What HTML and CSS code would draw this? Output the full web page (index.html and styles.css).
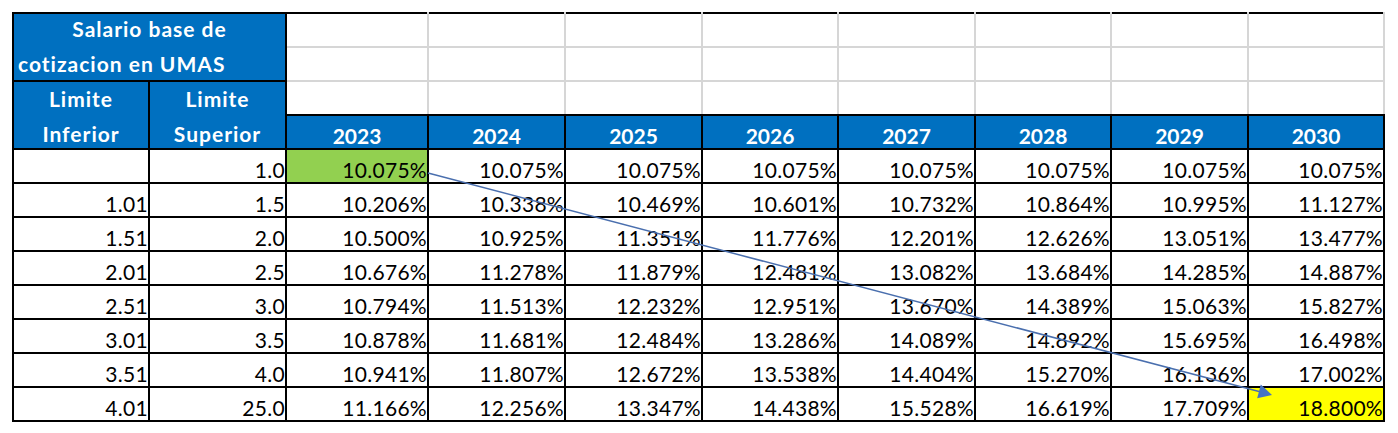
FILE: index.html
```html
<!DOCTYPE html>
<html lang="es">
<head>
<meta charset="utf-8">
<title>Salario base de cotizacion en UMAS</title>
<link rel="stylesheet" href="styles.css">
</head>
<body>
<div class="sheet">
  <table class="rates">
    <colgroup>
      <col class="c-lim"><col class="c-lim2"><col class="c-y23">
      <col class="c-y"><col class="c-y"><col class="c-y2"><col class="c-y">
      <col class="c-y2"><col class="c-y"><col class="c-y2">
    </colgroup>
    <tbody>
      <tr class="r-h1">
        <td class="hd merged" colspan="2" rowspan="2"><div class="box"><span class="l1">Salario base de</span><span class="l2">cotizacion en UMAS</span></div></td>
        <td class="blank top lft"></td><td class="blank top"></td><td class="blank top"></td><td class="blank top"></td><td class="blank top"></td><td class="blank top"></td><td class="blank top"></td><td class="blank top"></td>
      </tr>
      <tr class="r-h2">
        <td class="blank lft"></td><td class="blank"></td><td class="blank"></td><td class="blank"></td><td class="blank"></td><td class="blank"></td><td class="blank"></td><td class="blank"></td>
      </tr>
      <tr class="r-h3">
        <td class="hd lim" rowspan="2"><div class="box">Limite<br>Inferior</div></td>
        <td class="hd lim" rowspan="2"><div class="box">Limite<br>Superior</div></td>
        <td class="blank lft bot"></td><td class="blank bot"></td><td class="blank bot"></td><td class="blank bot"></td><td class="blank bot"></td><td class="blank bot"></td><td class="blank bot"></td><td class="blank bot"></td>
      </tr>
      <tr class="r-h4">
        <td class="hd yr">2023</td><td class="hd yr">2024</td><td class="hd yr">2025</td><td class="hd yr">2026</td><td class="hd yr">2027</td><td class="hd yr">2028</td><td class="hd yr">2029</td><td class="hd yr">2030</td>
      </tr>
      <tr>
        <td class="num"></td><td class="num">1.0</td><td class="num green">10.075%</td><td class="num">10.075%</td><td class="num">10.075%</td><td class="num">10.075%</td><td class="num">10.075%</td><td class="num">10.075%</td><td class="num">10.075%</td><td class="num">10.075%</td>
      </tr>
      <tr>
        <td class="num">1.01</td><td class="num">1.5</td><td class="num">10.206%</td><td class="num">10.338%</td><td class="num">10.469%</td><td class="num">10.601%</td><td class="num">10.732%</td><td class="num">10.864%</td><td class="num">10.995%</td><td class="num">11.127%</td>
      </tr>
      <tr>
        <td class="num">1.51</td><td class="num">2.0</td><td class="num">10.500%</td><td class="num">10.925%</td><td class="num">11.351%</td><td class="num">11.776%</td><td class="num">12.201%</td><td class="num">12.626%</td><td class="num">13.051%</td><td class="num">13.477%</td>
      </tr>
      <tr>
        <td class="num">2.01</td><td class="num">2.5</td><td class="num">10.676%</td><td class="num">11.278%</td><td class="num">11.879%</td><td class="num">12.481%</td><td class="num">13.082%</td><td class="num">13.684%</td><td class="num">14.285%</td><td class="num">14.887%</td>
      </tr>
      <tr>
        <td class="num">2.51</td><td class="num">3.0</td><td class="num">10.794%</td><td class="num">11.513%</td><td class="num">12.232%</td><td class="num">12.951%</td><td class="num">13.670%</td><td class="num">14.389%</td><td class="num">15.063%</td><td class="num">15.827%</td>
      </tr>
      <tr>
        <td class="num">3.01</td><td class="num">3.5</td><td class="num">10.878%</td><td class="num">11.681%</td><td class="num">12.484%</td><td class="num">13.286%</td><td class="num">14.089%</td><td class="num">14.892%</td><td class="num">15.695%</td><td class="num">16.498%</td>
      </tr>
      <tr>
        <td class="num">3.51</td><td class="num">4.0</td><td class="num">10.941%</td><td class="num">11.807%</td><td class="num">12.672%</td><td class="num">13.538%</td><td class="num">14.404%</td><td class="num">15.270%</td><td class="num">16.136%</td><td class="num">17.002%</td>
      </tr>
      <tr>
        <td class="num">4.01</td><td class="num">25.0</td><td class="num">11.166%</td><td class="num">12.256%</td><td class="num">13.347%</td><td class="num">14.438%</td><td class="num">15.528%</td><td class="num">16.619%</td><td class="num">17.709%</td><td class="num yellow">18.800%</td>
      </tr>
    </tbody>
  </table>
  <svg class="arrow" width="1398" height="433" viewBox="0 0 1398 433" aria-hidden="true">
    <line x1="428" y1="173" x2="1260" y2="391.8" stroke="#4a6fae" stroke-width="1.5"/>
    <polygon points="1272,395 1257.2,398.2 1260.8,384.6" fill="#4472c4"/>
  </svg>
</div>
</body>
</html>
```

FILE: styles.css
```css
html, body {
  margin: 0;
  padding: 0;
  background: #ffffff;
}

.sheet {
  position: relative;
  width: 1398px;
  height: 433px;
  overflow: hidden;
}

.rates {
  border-collapse: collapse;
  table-layout: fixed;
  width: 1371px;
  margin: 12px 0 0 12px;
  font-family: Lato, "Liberation Sans", sans-serif;
  font-size: 21px;
  color: #000000;
}

.c-lim { width: 136px; }
.c-lim2 { width: 137px; }
.c-y23 { width: 142px; }
.c-y { width: 137px; }
.c-y2 { width: 136px; }

.rates tr { height: 34px; }

.rates td {
  padding: 0;
  white-space: nowrap;
  overflow: visible;
}

.blank {
  border: 2px solid #d6d6d6;
}
.blank.top { border-top: 2px solid #000000; }
.blank.lft { border-left: 2px solid #000000; }
.blank.bot { border-bottom: 2px solid #000000; }

.hd {
  background: #0070c0;
  color: #ffffff;
  font-weight: 700;
  border: 2px solid #000000;
  text-align: center;
}

.box {
  height: 66px;
  line-height: 35px;
  letter-spacing: 1px;
}

.merged,
.lim {
  vertical-align: top;
}

.merged .box {
  margin-top: -3px;
  height: 69px;
}
.lim .box {
  margin-top: -1px;
  height: 67px;
}
.merged .l1 {
  display: block;
  text-align: center;
}
.merged .l2 {
  display: block;
  text-align: left;
  padding-left: 4px;
}

.yr {
  vertical-align: bottom;
  line-height: 25px;
  padding-bottom: 3px;
}

.num {
  border: 2px solid #000000;
  text-align: right;
  vertical-align: bottom;
  line-height: 25px;
  letter-spacing: 0.3px;
  padding: 0 6px 3px 0;
}

.green { background: #92d050; }
.yellow { background: #ffff00; }

.arrow {
  position: absolute;
  left: 0;
  top: 0;
  pointer-events: none;
}
```
